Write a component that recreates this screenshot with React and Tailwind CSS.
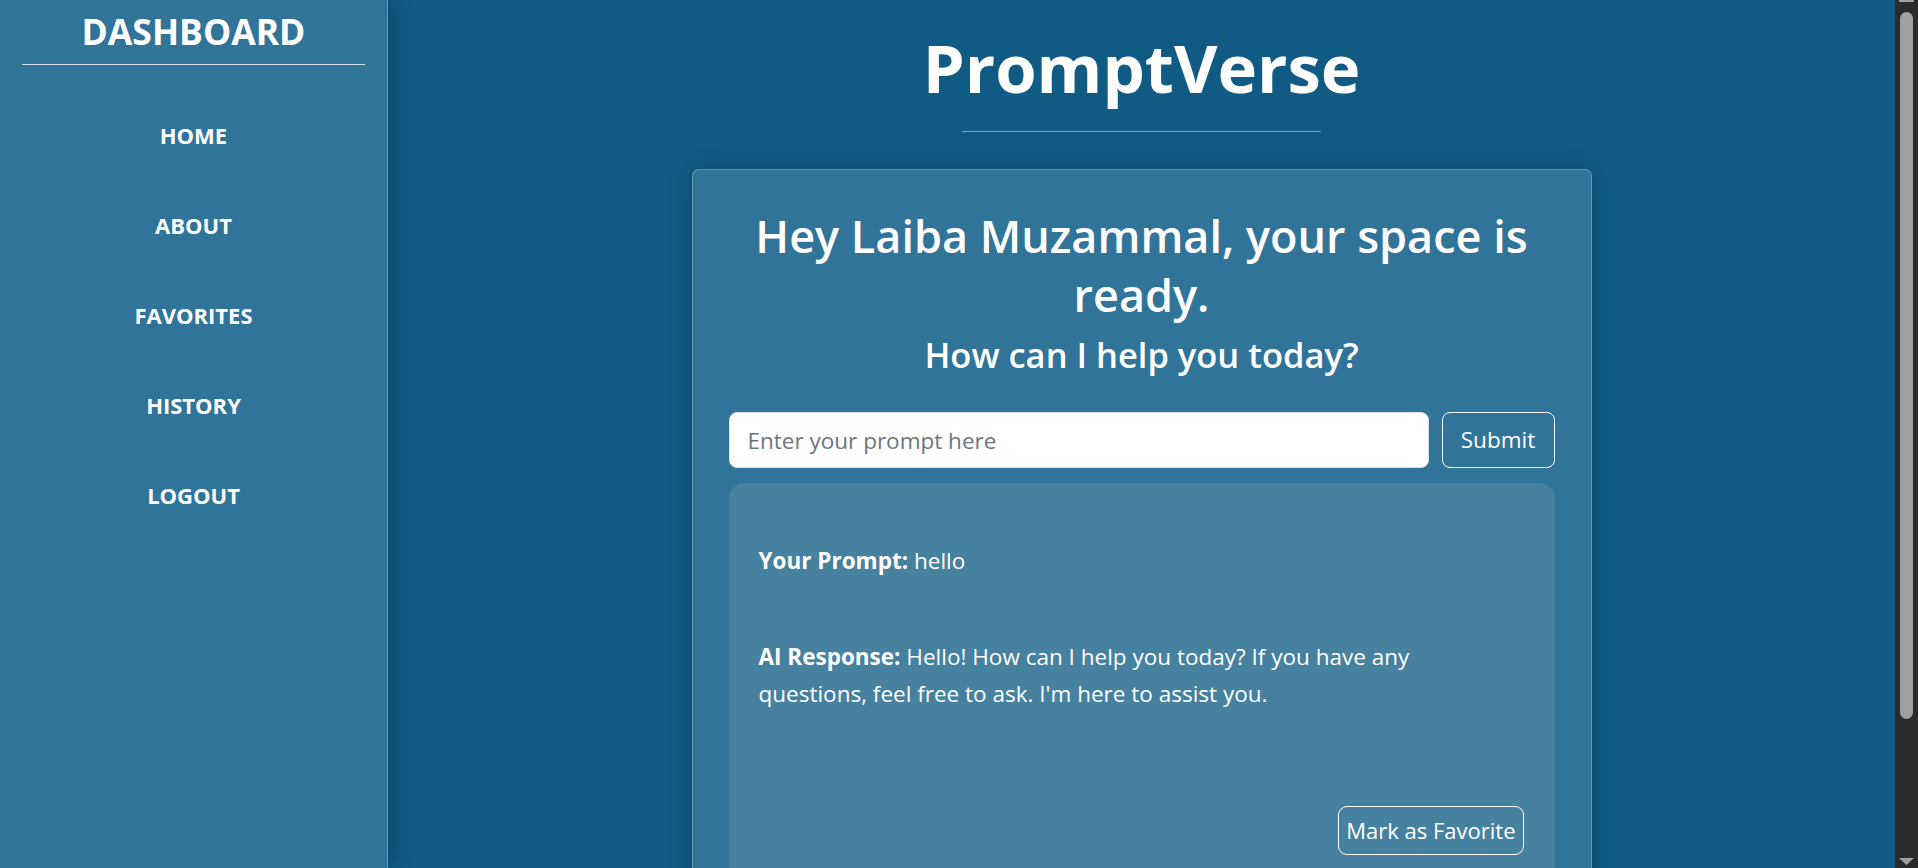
const navItems = ['HOME', 'ABOUT', 'FAVORITES', 'HISTORY', 'LOGOUT'];

const Sidebar = () => (
    <aside className="w-[388px] shrink-0 bg-[#30749a] border-r border-white/25 shadow-[6px_0_18px_rgba(0,0,0,0.18)] z-10 flex flex-col items-center px-[22px]">
        <h2 className="mt-[8px] text-[35.5px] leading-[46px] font-bold text-white">DASHBOARD</h2>
        <div className="w-full h-px shrink-0 bg-white/80 mt-[10px]" />
        <nav className="w-full flex flex-col items-center mt-[56px] gap-[61px]">
            {navItems.map((item) => (
                <a key={item} href="#" className="text-[22px] leading-[29px] font-bold text-white">
                    {item}
                </a>
            ))}
        </nav>
    </aside>
);

// fake window scrollbar, it takes up its own strip like the real one
const ScrollBar = () => (
    <div className="w-[23px] shrink-0 bg-[#2b2b2b] flex flex-col items-center">
        <div className="w-[15px] h-[2px] bg-[#9f9f9f]" />
        <div className="mt-[10px] w-[13px] h-[707px] shrink-0 rounded-full bg-[#9f9f9f]" />
        <div className="flex-1" />
        <svg width="15" height="7" viewBox="0 0 15 7" className="mb-[3px] shrink-0">
            <polygon points="0,0 15,0 7.5,7" fill="#9f9f9f" />
        </svg>
    </div>
);

const ResultBox = () => (
    <div className="mt-[15px] rounded-[15px] bg-[#4682a0] px-[30px] pt-[59px] pb-[150px] text-[22.5px] leading-[37px] text-white">
        <p>
            <strong className="font-bold">Your Prompt:</strong> hello
        </p>
        <p className="mt-[59px]">
            <strong className="font-bold">AI Response:</strong> Hello! How can I help you today? If you have any
            <br />
            questions, feel free to ask. I'm here to assist you.
        </p>
        <div className="flex justify-end mt-[94px] pr-[1px]">
            <button className="h-[49px] px-[7px] rounded-[9px] border border-white text-[22px] text-white">
                Mark as Favorite
            </button>
        </div>
    </div>
);

const App = () => {
    return (
        <div className="h-screen overflow-hidden flex bg-[#0f5b84] font-['Open_Sans',sans-serif]">
            <div className="flex-1 flex">
                <Sidebar />
                <main className="flex-1 flex flex-col items-center">
                    <h1 className="mt-[22px] shrink-0 text-[67px] leading-[90px] font-bold text-white">PromptVerse</h1>
                    <div className="w-[359px] h-px shrink-0 bg-white/45 mt-[19px]" />
                    <section className="mt-[37px] w-[900px] shrink-0 rounded-[7px] border border-white/25 bg-[#31749a] shadow-[0_0_24px_rgba(0,0,0,0.2)] px-[36px] pt-[36px] pb-[40px]">
                        <h2 className="text-center text-[45px] leading-[59px] font-semibold text-white px-[10px]">
                            Hey Laiba Muzammal, your space is ready.
                        </h2>
                        <h3 className="mt-[8px] text-center text-[34.5px] leading-[46px] font-semibold text-white">
                            How can I help you today?
                        </h3>
                        <div className="mt-[34px] flex gap-[13px]">
                            <input
                                type="text"
                                placeholder="Enter your prompt here"
                                className="flex-1 h-[56px] rounded-[8px] border border-[#dee2e6] bg-white px-[18px] text-[22.5px] text-gray-900 placeholder:text-[#6c757d] outline-none"
                            />
                            <button className="h-[56px] w-[113px] rounded-[8px] border border-white text-[22.5px] text-white">
                                Submit
                            </button>
                        </div>
                        <ResultBox />
                    </section>
                </main>
            </div>
            <ScrollBar />
        </div>
    );
};

export default App;
